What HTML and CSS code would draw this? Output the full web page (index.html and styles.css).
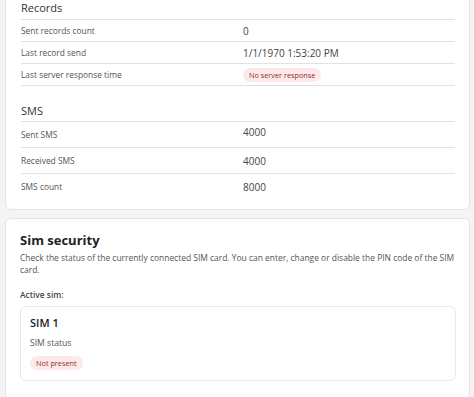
FILE: index.html
```html
<!DOCTYPE html>
<html lang="en">
<head>
    <meta charset="UTF-8">
    <meta name="viewport" content="width=device-width, initial-scale=1.0">
    <title>Mobile status</title>
    <link rel="stylesheet" href="styles.css">
</head>
<body>
    <div class="card card-top">
        <div class="section-title">Records</div>
        <div class="row">
            <div class="label">Sent records count</div>
            <div class="value">0</div>
        </div>
        <div class="row">
            <div class="label">Last record send</div>
            <div class="value">1/1/1970 1:53:20 PM</div>
        </div>
        <div class="row">
            <div class="label">Last server response time</div>
            <div class="value"><span class="badge">No server response</span></div>
        </div>

        <div class="section-title sms-title">SMS</div>
        <div class="row tall">
            <div class="label">Sent SMS</div>
            <div class="value raised">4000</div>
        </div>
        <div class="row tall">
            <div class="label">Received SMS</div>
            <div class="value">4000</div>
        </div>
        <div class="row tall last">
            <div class="label">SMS count</div>
            <div class="value">8000</div>
        </div>
    </div>

    <div class="card sim-card">
        <h2 class="card-title">Sim security</h2>
        <p class="description">Check the status of the currently connected SIM card. You can enter, change or disable the PIN code of the SIM card.</p>
        <div class="sub-label">Active sim:</div>
        <div class="sim-box">
            <div class="sim-name">SIM 1</div>
            <div class="sim-status">SIM status</div>
            <span class="badge">Not present</span>
        </div>
    </div>
</body>
</html>
```

FILE: styles.css
```css
body {
    margin: 0;
    padding: 0 4px 0 5px;
    font-family: 'Open Sans', sans-serif;
    background-color: #f4f4f5;
    color: #444;
}
.card {
    background: #fff;
    border: 1px solid #e4e4e6;
    border-radius: 6px;
}
.card-top {
    margin-top: -12px; /* page is scrolled, top of the card is cut off */
    padding: 11px 14px 10px 15px;
}
.section-title {
    font-size: 11px;
    color: #333;
    height: 19px;
    line-height: 16px;
    border-bottom: 1px solid #e2e2e4;
}
.sms-title {
    margin-top: 15px;
    height: 20px;
    line-height: 20px;
}
.row {
    display: grid;
    grid-template-columns: 222px 1fr;
    align-items: center;
    height: 21px;
    border-bottom: 1px solid #e2e2e4;
}
.row.tall {
    height: 25px;
}
.row.last {
    border-bottom: none;
}
.label {
    font-size: 8.4px;
    color: #555;
}
.value {
    font-size: 10px;
    color: #444;
}
.value.raised {
    align-self: start;
    padding-top: 3px;
}
.badge {
    display: inline-block;
    background: #fce9e9;
    color: #9b2a2a;
    font-size: 7.3px;
    line-height: 14px;
    padding: 0 6px;
    border-radius: 8px;
}
.sim-card {
    margin-top: 8px;
    padding: 10px 13px 18px 14px;
}
.card-title {
    margin: 0;
    font-size: 13px;
    font-weight: 700;
    color: #222;
    line-height: 22px;
}
.description {
    margin: 1px 0 0;
    font-size: 8.45px;
    line-height: 12px;
    color: #555;
}
.sub-label {
    margin-top: 13px;
    font-size: 8.4px;
    line-height: 12px;
    font-weight: 600;
    color: #444;
}
.sim-box {
    margin-top: 5px;
    border: 1px solid #e8e8ea;
    border-radius: 6px;
    padding: 8px 9px 9px;
}
.sim-name {
    font-size: 11px;
    line-height: 15px;
    font-weight: 600;
    color: #222;
}
.sim-status {
    margin-top: 7px;
    font-size: 8.6px;
    line-height: 12px;
    color: #555;
}
.sim-box .badge {
    margin-top: 4px;
}
```
